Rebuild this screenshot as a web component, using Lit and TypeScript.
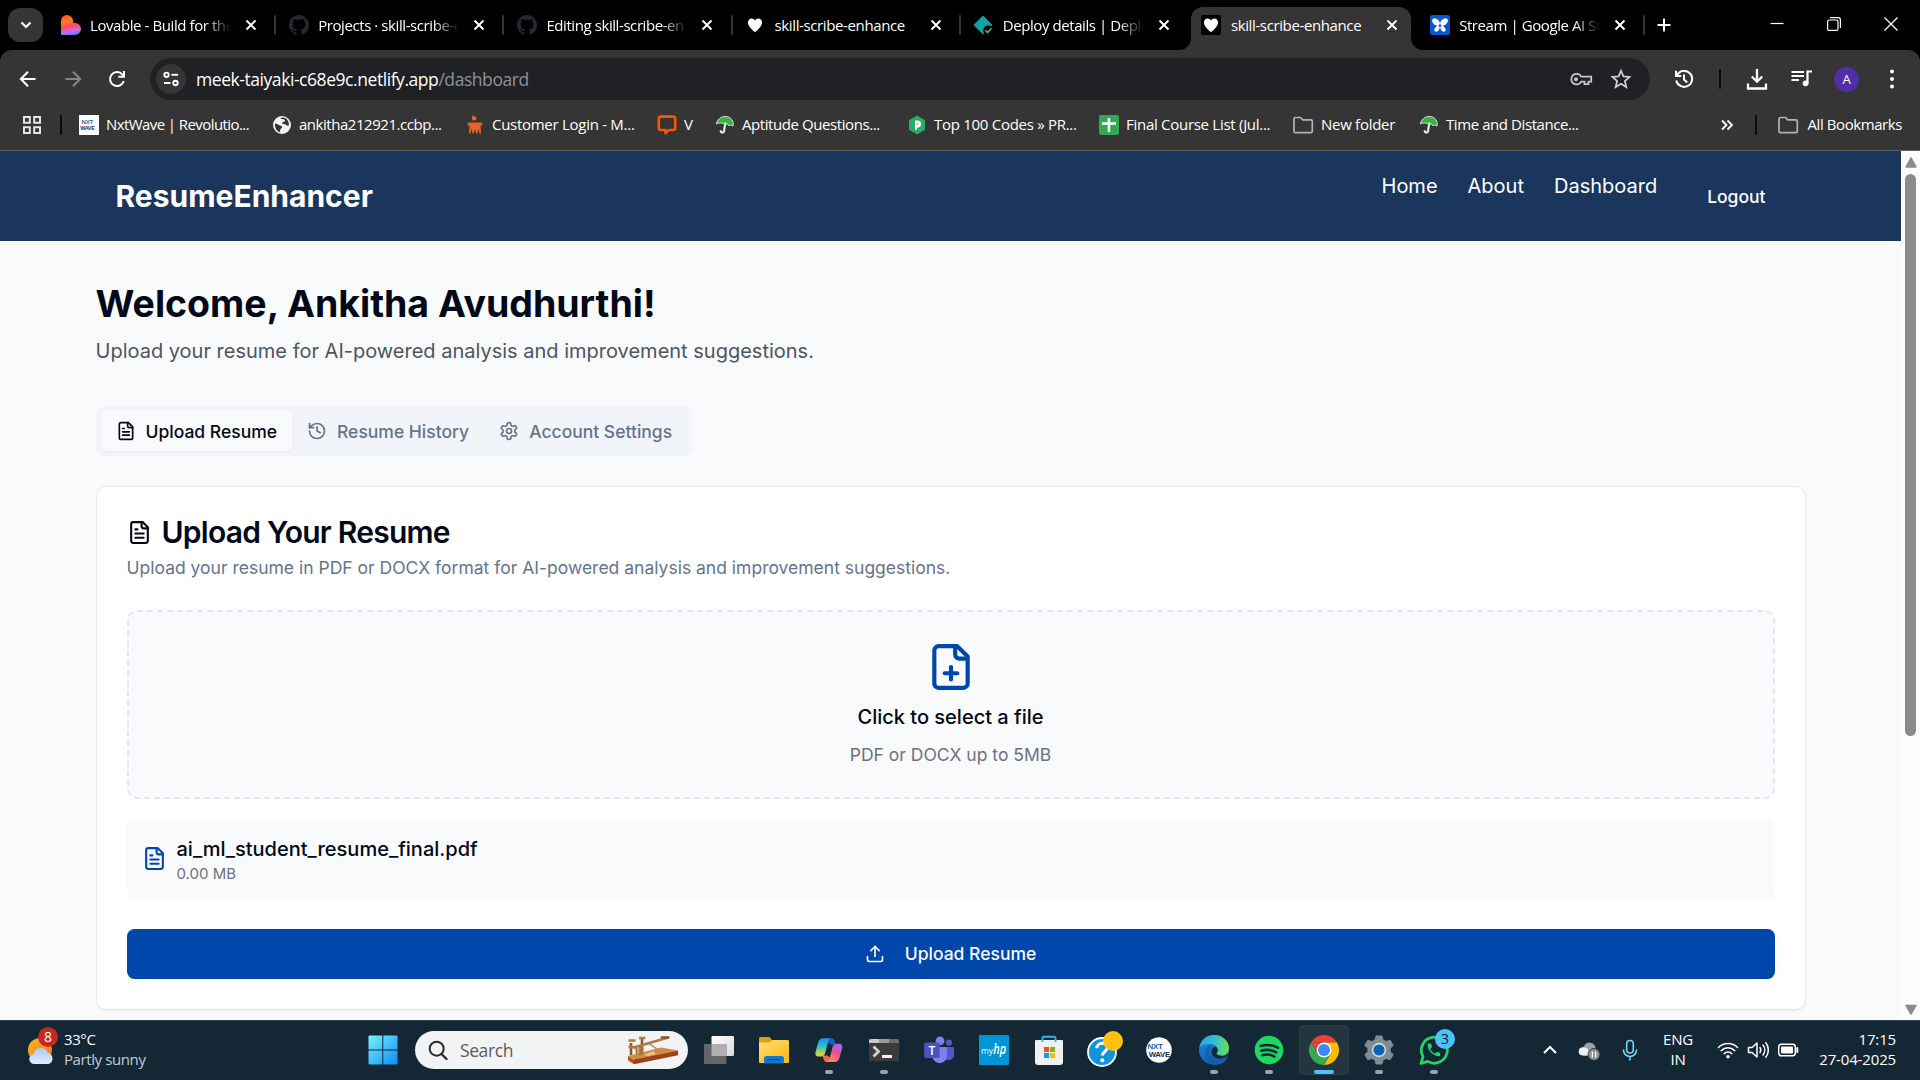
import { LitElement, html, css, svg } from "lit";
import type { TemplateResult } from "lit";
import { customElement } from "lit/decorators.js";
import { classMap } from "lit/directives/class-map.js";

/* ---------- icon helpers ---------- */

const icon = (size: number, box: string, body: unknown, cls = "") =>
  html`<svg class="ic ${cls}" width=${size} height=${size} viewBox=${box}>${body}</svg>`;

const line = (size: number, body: unknown, width = 2) =>
  html`<svg class="ic" width=${size} height=${size} viewBox="0 0 24 24" fill="none" stroke="currentColor"
    stroke-width=${width} stroke-linecap="round" stroke-linejoin="round">${body}</svg>`;

const sheet = svg`<path d="M15 2H6a2 2 0 0 0-2 2v16a2 2 0 0 0 2 2h12a2 2 0 0 0 2-2V7Z"/><path d="M14 2v4a2 2 0 0 0 2 2h4"/>`;
const fileText = svg`${sheet}<path d="M10 9H8"/><path d="M16 13H8"/><path d="M16 17H8"/>`;
const filePlus = svg`${sheet}<path d="M9 15h6"/><path d="M12 18v-6"/>`;
const history = svg`<path d="M3 12a9 9 0 1 0 9-9 9.750 9.750 0 0 0-6.740 2.740L3 8"/><path d="M3 3v5h5"/><path d="M12 7v5l4 2"/>`;
const gear = svg`<path d="M12.22 2h-.44a2 2 0 0 0-2 2v.18a2 2 0 0 1-1 1.73l-.43.25a2 2 0 0 1-2 0l-.15-.08a2 2 0 0 0-2.73.73l-.22.38a2 2 0 0 0 .73 2.73l.15.1a2 2 0 0 1 1 1.72v.51a2 2 0 0 1-1 1.74l-.15.09a2 2 0 0 0-.73 2.73l.22.38a2 2 0 0 0 2.73.73l.15-.08a2 2 0 0 1 2 0l.43.25a2 2 0 0 1 1 1.73V20a2 2 0 0 0 2 2h.44a2 2 0 0 0 2-2v-.18a2 2 0 0 1 1-1.73l.43-.25a2 2 0 0 1 2 0l.15.08a2 2 0 0 0 2.73-.73l.22-.39a2 2 0 0 0-.73-2.73l-.15-.08a2 2 0 0 1-1-1.74v-.5a2 2 0 0 1 1-1.74l.15-.09a2 2 0 0 0 .73-2.73l-.22-.38a2 2 0 0 0-2.73-.73l-.15.08a2 2 0 0 1-2 0l-.43-.25a2 2 0 0 1-1-1.73V4a2 2 0 0 0-2-2z"/><circle cx="12" cy="12" r="3"/>`;
const upload = svg`<path d="M21 15v4a2 2 0 0 1-2 2H5a2 2 0 0 1-2-2v-4"/><path d="m17 8-5-5-5 5"/><path d="M12 3v12"/>`;

const github = icon(20, "0 0 16 16", svg`<path fill="#24292f" d="M8 0C3.58 0 0 3.58 0 8c0 3.54 2.29 6.53 5.47 7.59.4.07.55-.17.55-.38 0-.19-.01-.82-.01-1.49-2.01.37-2.53-.49-2.69-.94-.09-.23-.48-.94-.82-1.13-.28-.15-.68-.52-.01-.53.63-.01 1.08.58 1.23.82.72 1.21 1.87.87 2.33.66.07-.52.28-.87.51-1.07-1.78-.2-3.64-.89-3.64-3.95 0-.87.31-1.59.82-2.15-.08-.2-.36-1.02.08-2.12 0 0 .67-.21 2.2.82.64-.18 1.32-.27 2-.27s1.36.09 2 .27c1.53-1.04 2.2-.82 2.2-.82.44 1.1.16 1.92.08 2.12.51.56.82 1.27.82 2.15 0 3.07-1.87 3.75-3.65 3.95.29.25.54.73.54 1.48 0 1.07-.01 1.93-.01 2.2 0 .21.15.46.55.38A8.01 8.01 0 0 0 16 8c0-4.42-3.58-8-8-8z"/>`);

const lovable = icon(20, "0 0 20 20", svg`<defs><linearGradient id="lov" x1="0.35" y1="0" x2="0.55" y2="1"><stop offset="0" stop-color="#ff5a1f"/><stop offset=".3" stop-color="#ff7a22"/><stop offset=".55" stop-color="#fb4b5b"/><stop offset=".8" stop-color="#c86be8"/><stop offset="1" stop-color="#5a7bff"/></linearGradient></defs><path fill="url(#lov)" d="M6 0a6 6 0 0 1 6 6v2h2a6 6 0 0 1 0 12H0V6a6 6 0 0 1 6-6z"/>`);

const heartPath = "M10 17.2C7 14.6 3 11.2 3 7.4 3 5 4.7 3.4 6.7 3.4c1.4 0 2.6.8 3.3 2 .7-1.2 1.9-2 3.3-2 2 0 3.7 1.6 3.7 4 0 3.8-4 7.2-7 9.8z";
const heart = icon(20, "0 0 20 20", svg`<rect width="20" height="20" rx="2" fill="#000"/><path fill="#fff" d=${heartPath}/>`);

const netlify = icon(20, "0 0 20 20", svg`<path fill="#0fa3a3" d="M10 .5 19.5 10 10 19.5.5 10z"/><circle cx="15.4" cy="15.4" r="5.2" fill="#000"/><path d="m12.400 15.400 2.200 2.200 3.900-4.400" fill="none" stroke="#3fbf4f" stroke-width="1.600"/>`);

const butterfly = icon(20, "0 0 20 20", svg`<rect width="20" height="20" rx="2.500" fill="#0b57d0"/><g fill="#fff"><ellipse cx="6" cy="7" rx="4.300" ry="2.900" transform="rotate(42 6 7)"/><ellipse cx="14" cy="7" rx="4.300" ry="2.900" transform="rotate(-42 14 7)"/><ellipse cx="7" cy="13.800" rx="3.200" ry="2.100" transform="rotate(-50 7 13.800)"/><ellipse cx="13" cy="13.800" rx="3.200" ry="2.100" transform="rotate(50 13 13.800)"/></g>`);

const closeX = icon(12, "0 0 12 12", svg`<path d="M1.500 1.500l9 9M10.500 1.500l-9 9" stroke="#fff" stroke-width="1.900"/>`);

const folder = icon(22, "0 0 22 22", svg`<path d="M2 5a1.500 1.500 0 0 1 1.500-1.500h5l2.300 2.300h8A1.500 1.500 0 0 1 20.300 7.300v9.900a1.500 1.500 0 0 1-1.500 1.500H3.500A1.500 1.500 0 0 1 2 17.200z" fill="none" stroke="#b4b4b4" stroke-width="1.700"/>`);

const umbrella = icon(20, "0 0 20 20", svg`<path d="M1.500 9C2 3 9 0 13.500 2c4 1.700 5.500 6 4.500 9-1.500-1-3-1.200-4.300-.3C12.500 9 10.500 8 8.500 8.800 6.500 7.600 3.500 7.500 1.500 9z" fill="#3fae49" stroke="#d7efd8" stroke-width=".9"/><path d="M10.500 8.500c-1 3-1 5-1.500 7.500-.3 2.300-3 2.300-3.300 0" fill="none" stroke="#dfe9df" stroke-width="2.200" stroke-linecap="round"/>`);

const nxtMini = icon(20, "0 0 20 20", svg`<rect width="20" height="20" fill="#fff"/><text x="2.500" y="9" class="t-nxt" font-size="6.200" fill="#2a6fb5">NXT</text><text x="1.200" y="15.400" class="t-nxt" font-size="5.400" fill="#123a5c">WAVE</text>`);
const globe = icon(20, "0 0 20 20", svg`<circle cx="10" cy="10" r="9" fill="#f1f3f4"/><path fill="#353535" d="M3 8.500c2.500 0 3.500 2 6 2.200 1.500.2 1.700 2 .2 2.700-1.500.6-.5 2.400-1.700 3.800C5 16.400 2.500 12.500 3 8.500zM8.500 3c1 2 3.500.4 4.500 2.200.8 1.500-3 1.300-2.800 3 .3 1.700 3.300.4 4.300 1.900.5.800 1.800.6 2.500.1C17 6 14.500 2.600 10.500 2.600z"/>`);
const mojo = icon(20, "0 0 20 20", svg`<path fill="#e8622c" d="M9 5.500C6 5 6.500 2 8 0c.5 1.500 3.500 1.500 3.500 3.500 0 1.200-1 2-2.500 2zM3 7.500h14l.5 3h-15zM4.500 10.500h11l.5 8h-1.500l-1-5-1 5h-1.300L10 14l-1.200 4.500H7.500l-1-5-1 5H4z"/>`);
const chatV = icon(20, "0 0 20 20", svg`<path fill="none" stroke="#fb5607" stroke-width="2.600" stroke-linejoin="round" d="M3.500 1.600h13a1.700 1.700 0 0 1 1.700 1.700v10a1.700 1.700 0 0 1-1.700 1.700H12l-3.500 3.200V15h-5a1.700 1.700 0 0 1-1.700-1.700v-10a1.700 1.700 0 0 1 1.700-1.700z"/>`);
const hexP = icon(20, "0 0 20 20", svg`<path fill="#27ae60" d="m10 .5 8 4.700v9.600l-8 4.700-8-4.700V5.200z"/><path fill="#fff" d="M8 5.500h2.600a3.500 3.500 0 0 1 0 7H10v2.200H8z"/><circle cx="10.500" cy="9" r=".8" fill="#27ae60"/>`);
const sheets = icon(20, "0 0 20 20", svg`<rect width="20" height="20" rx="2" fill="#34a853"/><path fill="#fff" d="M8.700 3h2.500v14H8.700zM3 7.300h14v2.500H3z"/>`);

/* ---------- taskbar icons ---------- */

const weather = html`<svg class="ic" width="32" height="34" viewBox="0 0 32 34"><defs><linearGradient id="sun" x1="0" y1="0" x2="1" y2="1"><stop offset="0" stop-color="#fbb72a"/><stop offset="1" stop-color="#f2711c"/></linearGradient><linearGradient id="cld" x1="0" y1="0" x2="0" y2="1"><stop offset="0" stop-color="#a9c8fb"/><stop offset="1" stop-color="#e4ecfb"/></linearGradient></defs><circle cx="13" cy="17" r="12" fill="url(#sun)"/><path fill="url(#cld)" d="M7.500 31a5 5 0 0 1-.5-10 7 7 0 0 1 13.600-1.200A5.800 5.800 0 0 1 21.600 31z"/></svg>`;
const windowsLogo = icon(30, "0 0 30 30", svg`<defs><linearGradient id="win" x1="0" y1="0" x2="1" y2="1"><stop offset="0" stop-color="#7af0ff"/><stop offset="1" stop-color="#0a8df5"/></linearGradient></defs><path fill="url(#win)" d="M1.500.5H14.300v14.100H.5V1.500a1 1 0 0 1 1-1zM15.300.5h13.200a1 1 0 0 1 1 1v13.100H15.300zM.5 15.600h13.800v13.900H1.500a1 1 0 0 1-1-1zM15.300 15.600h14.200v12.900a1 1 0 0 1-1 1H15.300z"/>`);
const magnifier = icon(20, "0 0 20 20", svg`<circle cx="8.700" cy="8.700" r="7" fill="none" stroke="#2b2b2b" stroke-width="2"/><path d="m13.500 14 5 5" stroke="#2b2b2b" stroke-width="2.400" stroke-linecap="round"/>`);
const telegraph = html`<svg class="ic" width="52" height="30" viewBox="0 0 52 30"><path fill="#d08a4a" d="m1 21 33-8.500 17 3L8 24.500z"/><path fill="#b5531c" d="M1 21l6 3.500v4.700l-6-4z"/><path fill="#9c4416" d="M7 24.500 51 15.500v4.700L7 29.200z"/><path fill="#f0c481" d="m17 20 9-4 3 3-8 2z"/><path d="M4 20V8M15 15V4" stroke="#8f5a2c" stroke-width="2.600"/><path d="M1.500 12h6M1.500 5.500h7M12 3h6.500" stroke="#b07a45" stroke-width="2.400"/><path d="M7 12.500 41 2.500" stroke="#b27a42" stroke-width="2.800" stroke-linecap="round"/><path d="M35 2.500h6" stroke="#8a5428" stroke-width="2.600" stroke-linecap="round"/><path d="m22 8.500 10 7" stroke="#b98552" stroke-width="1.500"/><rect x="8.500" y="11" width="8" height="9" rx="3" fill="#a86f3c"/><rect x="10" y="12" width="2.200" height="7" fill="#d6a56c"/></svg>`;

const taskView = icon(32, "0 0 32 32", svg`<defs><linearGradient id="tv" x1="0" y1="0" x2="1" y2="1"><stop offset="0" stop-color="#fff"/><stop offset="1" stop-color="#d9d9d9"/></linearGradient></defs><rect x="8.500" y="2" width="22.500" height="20" rx="1.200" fill="url(#tv)"/><rect x="1" y="10" width="22.500" height="20" rx="1.200" fill="#63676a"/><path fill="#aeb0b2" d="M8.500 10h15v12h-15z"/>`);
const explorer = icon(32, "0 0 32 32", svg`<defs><linearGradient id="fo" x1="0" y1="0" x2="1" y2="1"><stop offset="0" stop-color="#ffdf73"/><stop offset="1" stop-color="#fbb815"/></linearGradient></defs><path fill="#dfa00f" d="M1 4.500A1.500 1.500 0 0 1 2.500 3h9L14 6v5H1z"/><path fill="url(#fo)" d="M1 8.500h10.500L14 6h15.500A1.500 1.500 0 0 1 31 7.500v20.500a1 1 0 0 1-1 1H2a1 1 0 0 1-1-1z"/><path fill="#1478cf" d="M6 24.500A2.500 2.500 0 0 1 8.500 22h15a2.500 2.500 0 0 1 2.500 2.500V29.500H6z"/><path d="M10 25.600h12" stroke="#0b4f94" stroke-width="1.400" stroke-linecap="round"/>`);
const copilot = icon(32, "0 0 32 32", svg`<defs><linearGradient id="cp1" x1=".3" y1="0" x2=".3" y2="1"><stop offset="0" stop-color="#1b8df0"/><stop offset=".45" stop-color="#27c3c9"/><stop offset=".75" stop-color="#9ed35b"/><stop offset="1" stop-color="#f5c93a"/></linearGradient><linearGradient id="cp2" x1=".8" y1="0" x2=".3" y2="1"><stop offset="0" stop-color="#9c6cf2"/><stop offset=".5" stop-color="#e84f92"/><stop offset="1" stop-color="#ff8f4a"/></linearGradient></defs><g transform="translate(1.300 1.500) scale(.91)"><path fill="#1660d0" d="M10 3h9c2 0 3 1.500 3.600 4l.9 3h-5.500z"/><path fill="url(#cp1)" d="M9.500 3h9c-2 0-2.900 2-3.500 4.500l-3 11.500c-.7 2.500-1.800 4-4 4H4.500C1.500 23 .7 20.500 1.500 17.500l3-10.500C5.300 4.300 7 3 9.500 3z"/><path fill="#f06a50" d="M22.500 29h-9c-2 0-3-1.500-3.600-4L9 22h5.500z"/><path fill="url(#cp2)" d="M22.500 29h-9c2 0 2.900-2 3.500-4.500L20 13c.7-2.500 1.800-4 4-4h3.500c3 0 3.800 2.500 3 5.500l-3 10.500c-.8 2.700-2.500 4-5 4z"/></g>`);
const terminal = icon(32, "0 0 32 32", svg`<rect x="1" y="5" width="30" height="22" rx="1.600" fill="#3c3c3c"/><path fill="#c9c9c9" d="M2.600 5H11v4H1V6.600A1.600 1.600 0 0 1 2.600 5z"/><path fill="#999" d="M11 5h10v4H11z"/><path fill="#6e6e6e" d="M21 5h8.400A1.600 1.600 0 0 1 31 6.600V9H21z"/><path d="m5.500 12.500 5 5-5 5" fill="none" stroke="#d0d0d0" stroke-width="2.800"/><path fill="#f3f3f3" d="M14 21h10v3H14z"/>`);
const teams = icon(32, "0 0 32 32", svg`<circle cx="17" cy="7" r="4.400" fill="#7b83eb"/><circle cx="26" cy="8.500" r="3.100" fill="#5059c9"/><path fill="#5059c9" d="M21 13h8.800a1.200 1.200 0 0 1 1.200 1.200v7a5.500 5.500 0 0 1-9 3.800z"/><path fill="#7b83eb" d="M9.500 13h13a1.400 1.400 0 0 1 1.400 1.400v7.600a7.200 7.200 0 0 1-14.400 0z"/><rect x="1.200" y="8.500" width="15.500" height="15.500" rx="1.600" fill="#4b53bc"/><text x="9" y="20.700" text-anchor="middle" class="t-ui" font-size="12" font-weight="600" fill="#fff">T</text>`);
const myhp = icon(32, "0 0 32 32", svg`<rect x="1" y="1" width="30" height="30" rx="1" fill="#0096d6"/><text x="3" y="19.500" class="t-ui" font-size="9" fill="#fff" textLength="12" lengthAdjust="spacingAndGlyphs">my</text><text x="15.300" y="20" class="t-ui" font-size="14.500" font-style="italic" font-weight="600" fill="#fff" textLength="13" lengthAdjust="spacingAndGlyphs">hp</text>`);
const store = icon(32, "0 0 32 32", svg`<path fill="#f0f0f0" d="M2 7a1 1 0 0 1 1-1h26a1 1 0 0 1 1 1v21a3 3 0 0 1-3 3H5a3 3 0 0 1-3-3z"/><path d="M9.500 8V4a1.200 1.200 0 0 1 1.200-1.200h10.600A1.200 1.200 0 0 1 22.500 4v4" fill="none" stroke="#2ab4f2" stroke-width="1.900"/><path fill="#f25022" d="M11 13h5v5h-5z"/><path fill="#7fba00" d="M17 13h5v5h-5z"/><path fill="#00a4ef" d="M11 19h5v5h-5z"/><path fill="#ffb900" d="M17 19h5v5h-5z"/>`);
const help = icon(38, "0 0 38 38", svg`<circle cx="17" cy="21" r="14" fill="#0f95d8" stroke="#fff" stroke-width="1.800"/><path d="M11.800 17.200c.2-6.400 10.600-6.400 10.400-.3-.1 3.400-4.800 3.900-4.800 7.600" fill="none" stroke="#fff" stroke-width="3"/><circle cx="17.300" cy="29.200" r="2" fill="#fff"/><circle cx="28" cy="10" r="10" fill="#ffc20e"/>`);
const nxtWave = icon(32, "0 0 32 32", svg`<circle cx="16" cy="16" r="12.800" fill="#fff"/><text x="4.500" y="15" class="t-nxt" font-size="8" fill="#1f5f9e">NXT</text><text x="16.300" y="22.500" text-anchor="middle" class="t-nxt" font-size="7.800" fill="#17324d">WAVE</text>`);
const edge = icon(32, "0 0 32 32", svg`<defs><linearGradient id="ed1" x1="0" y1=".3" x2="1" y2=".4"><stop offset="0" stop-color="#2aa7e8"/><stop offset=".55" stop-color="#35c1c9"/><stop offset="1" stop-color="#6be04f"/></linearGradient><linearGradient id="ed2" x1=".2" y1="0" x2=".6" y2="1"><stop offset="0" stop-color="#1b8de0"/><stop offset="1" stop-color="#0c59a4"/></linearGradient></defs><circle cx="16" cy="16" r="15" fill="url(#ed2)"/><path fill="url(#ed1)" d="M1.500 13C2.500 6 8.500 1 16 1c9 0 15 6.500 15 13 0 5-3.500 7.500-7.500 7.500-3 0-5-1.200-5-2.200 0-.8 1.300-1.300 1.300-3.300 0-3.200-3.500-6-8-6-4.300 0-8 1-10.300 3z"/><path fill="#135fae" d="M11 17c0-3 2-5 4-6-5 0-8 4-7.500 9 .6 5.500 5 10 10 10.800C25 30.500 28.500 26 29.500 24c-7 4.500-18.500 1.500-18.500-7z"/><path fill="#142735" d="M18.500 19.300c0-.8 1.300-1.300 1.300-3.300a5 5 0 0 0-2-3.500c-3 .5-4.600 3-4.300 5.500.5 4.500 5 7.500 9.500 6.500 4-.9 7.500-2 8.500-6-2 2.500-5 3.800-8 3.400-3-.3-5-1.200-5-2.600z"/>`);
const spotify = icon(32, "0 0 32 32", svg`<circle cx="16" cy="16" r="14.300" fill="#1ed760"/><path d="M7.500 12c6-1.800 12.500-1.100 17.500 1.800M8.300 16.700c5-1.400 10.500-.9 15 1.700M9.200 21.200c4.200-1.100 8.500-.8 12.300 1.400" fill="none" stroke="#142735" stroke-width="2.500" stroke-linecap="round"/>`);
const chrome = icon(32, "0 0 32 32", svg`<path fill="#ea4335" d="M3 8.500A15 15 0 0 1 29 8.500H16z"/><path fill="#ea4335" d="M3 8.500h13v7.500H7.500z"/><path fill="#fbbc04" d="M29 8.500A15 15 0 0 1 16 31l6.500-11.200L16 8.500z"/><path fill="#34a853" d="M3 8.500A15 15 0 0 0 16 31l6.500-11.200h-13z"/><circle cx="16" cy="16" r="7.500" fill="#fff"/><circle cx="16" cy="16" r="6" fill="#4285f4"/>`);
const settingsIcon = icon(32, "0 0 32 32", svg`<path fill="#7f8b95" stroke="#7f8b95" stroke-width="1" stroke-linejoin="round" d="m13 2h6l1 3.900 3 1.700 4.200-1.300 3 5.200-3.100 2.800v3.400l3.100 2.800-3 5.200-4.200-1.300-3 1.700-1 3.900h-6l-1-3.900-3-1.700-4.200 1.300-3-5.200 3.100-2.800v-3.400l-3.100-2.800 3-5.200 4.200 1.300 3-1.700z"/><circle cx="16" cy="16" r="7.200" fill="#d6dce1"/><circle cx="16" cy="16" r="5.600" fill="#0b62b3"/>`);
const whatsapp = icon(32, "0 0 32 32", svg`<path d="M3 29.500 5 22.600A13 13 0 1 1 9.700 27.400z" fill="#142735" stroke="#25d366" stroke-width="2.800" stroke-linejoin="round"/><path fill="#25d366" transform="translate(7.500 7.500) scale(.7)" d="M6.600 10.800c1.400 2.800 3.800 5.100 6.600 6.600l2.200-2.200c.3-.3.700-.4 1-.2 1.100.4 2.300.6 3.600.6.600 0 1 .4 1 1V20c0 .6-.4 1-1 1C10.600 21 3 13.400 3 4c0-.6.400-1 1-1h3.500c.6 0 1 .4 1 1 0 1.300.2 2.500.6 3.600.1.300 0 .7-.2 1z"/>`);

/* ---------- data ---------- */

interface Tab { glyph: TemplateResult; label: string; active?: boolean; sep?: boolean; }
const TABS: Tab[] = [
  { glyph: lovable, label: "Lovable - Build for the", sep: true },
  { glyph: github, label: "Projects · skill-scribe-e", sep: true },
  { glyph: github, label: "Editing skill-scribe-en", sep: true },
  { glyph: heart, label: "skill-scribe-enhance", sep: true },
  { glyph: netlify, label: "Deploy details | Deplo" },
  { glyph: heart, label: "skill-scribe-enhance", active: true },
  { glyph: butterfly, label: "Stream | Google AI St", sep: true },
];

interface Mark { glyph: TemplateResult; label: string; fit: string; }
const BOOKMARKS: Mark[] = [
  { glyph: nxtMini, label: "NxtWave | Revolutio...", fit: "tight" },
  { glyph: globe, label: "ankitha212921.ccbp...", fit: "snug" },
  { glyph: mojo, label: "Customer Login - M...", fit: "wide" },
  { glyph: chatV, label: "V", fit: "" },
  { glyph: umbrella, label: "Aptitude Questions...", fit: "" },
  { glyph: hexP, label: "Top 100 Codes » PR...", fit: "wide" },
  { glyph: sheets, label: "Final Course List (Jul...", fit: "wide" },
  { glyph: folder, label: "New folder", fit: "wide" },
  { glyph: umbrella, label: "Time and Distance...", fit: "" },
];

interface App { glyph: TemplateResult; running?: boolean; active?: boolean; badge?: string; }
const APPS: App[] = [
  { glyph: taskView }, { glyph: explorer }, { glyph: copilot, running: true },
  { glyph: terminal, running: true }, { glyph: teams }, { glyph: myhp }, { glyph: store },
  { glyph: help }, { glyph: nxtWave }, { glyph: edge, running: true },
  { glyph: spotify, running: true }, { glyph: chrome, active: true },
  { glyph: settingsIcon, running: true }, { glyph: whatsapp, running: true, badge: "3" },
];

const shared = css`
  :host, *, *::before, *::after { box-sizing: border-box; }
  .ic { display: block; flex: none; }
  .t-ui { font-family: "Open Sans", sans-serif; letter-spacing: 0; }
  .t-nxt { font-family: "Liberation Sans", sans-serif; font-weight: 700; letter-spacing: -0.3px; }
`;

/* ---------- browser frame ---------- */

@customElement("browser-bar")
class BrowserBar extends LitElement {
  static styles = [shared, css`
    :host { display: block; height: 151px; background: #353535; border-bottom: 1px solid #5f6061; color: #fff;
      font-family: "Open Sans", "Noto Sans", sans-serif; font-size: 15px; letter-spacing: -0.42px; white-space: nowrap; }
    .strip { height: 50px; background: #000; display: flex; align-items: stretch; padding-left: 8px; }
    .search { width: 35px; height: 34px; margin: 8px 5px 0 0; border-radius: 12px; background: #353535; display: grid; place-items: center; }
    .tab { width: 228.2px; display: flex; align-items: center; padding-left: 12.5px; position: relative; }
    .label { width: 152px; margin-left: 9.500px; line-height: 24px;
      -webkit-mask-image: linear-gradient(90deg, #000 115px, transparent 141px); mask-image: linear-gradient(90deg, #000 115px, transparent 141px); }
    .label.whole { -webkit-mask-image: none; mask-image: none; letter-spacing: -0.38px; }
    .x { margin-left: 3px; }
    .sep::after { content: ""; position: absolute; right: 0; top: 15px; width: 2px; height: 20px; background: #353535; border-radius: 1px; }
    .active::before { content: ""; position: absolute; left: 2px; right: 6px; top: 7px; bottom: 0; background: #353535; border-radius: 12px 12px 0 0; }
    .active > * { position: relative; }
    .active > .foot { position: absolute; left: -10px; bottom: 0; height: 12px; width: 244px; }
    .plus { display: flex; align-items: center; padding-left: 11px; }
    .win { margin-left: auto; display: flex; align-items: center; gap: 41px; padding: 0 21px 3px 0; }
    .bar { height: 50px; display: flex; align-items: center; padding: 8px 16px 0 16px; background: #353535; border-radius: 12px 12px 0 0; }
    .under { background: #000; }
    .nav { display: flex; gap: 20.500px; width: 134px; flex: none; }
    .omni { width: 1501px; height: 42px; border-radius: 21px; background: #202124; display: flex; align-items: center; padding: 0 18px 0 6px; font-size: 17.500px; letter-spacing: -0.44px; }
    .site { width: 30px; height: 30px; border-radius: 50%; background: #353535; display: grid; place-items: center; margin-right: 10px; }
    .path { color: #8f9194; }
    .omni-end { margin-left: auto; display: flex; align-items: center; gap: 17px; }
    .tools { display: flex; align-items: center; padding-left: 22px; flex: 1; }
    .vr { width: 2px; height: 20px; background: #0b0b0b; border-radius: 1px; }
    .vr.mid { margin: 0 24px 0 23px; }
    .vr.late { margin-left: 21px; }
    .avatar { width: 25px; height: 25px; margin: 0 21px; border-radius: 50%; background: #512da8; display: grid; place-items: center; font-size: 13px; letter-spacing: 0; }
    .media { margin-left: 20px; }
    .marks { height: 50px; display: flex; align-items: center; padding: 0 18px 0 22px; }
    .apps { margin-right: 18px; }
    .items { display: grid; grid-template-columns: 193px 193px 192px 58px 192px 192px 193px 127px 170px; margin-left: 17px; }
    .mark { display: flex; align-items: center; gap: 8px; }
    .mark span, .all span { position: relative; top: -1px; }
    .mark span { margin-left: -1px; }
    .tight { letter-spacing: -0.58px; }
    .snug { letter-spacing: -0.46px; }
    .wide { letter-spacing: -0.28px; }
    .more { display: flex; align-items: center; margin-left: auto; }
    .all { display: flex; align-items: center; gap: 9px; margin-left: 20px; }
  `];

  private tab(t: Tab) {
    const cls = { tab: true, active: !!t.active, sep: !!t.sep };
    const whole = t.label === "skill-scribe-enhance";
    return html`<div class=${classMap(cls)}>
      ${t.active ? html`<svg class="foot" viewBox="0 0 244 12"><path fill="#353535" d="M0 12A12 12 0 0 0 12 0v12zM244 12A12 12 0 0 1 232 0v12z"/></svg>` : null}
      ${t.glyph}<span class=${classMap({ label: true, whole })}>${t.label}</span>
      <span class="x">${closeX}</span>
    </div>`;
  }

  render() {
    return html`
      <div class="strip">
        <div class="search">${icon(14, "0 0 14 14", svg`<path d="m2.500 4.500 4.500 4.500 4.500-4.500" fill="none" stroke="#fff" stroke-width="2.200"/>`)}</div>
        ${TABS.map((t) => this.tab(t))}
        <div class="plus">${icon(16, "0 0 16 16", svg`<path d="M8 1.500v13M1.500 8h13" stroke="#fff" stroke-width="2"/>`)}</div>
        <div class="win">
          ${icon(16, "0 0 16 16", svg`<path d="M1.500 7.500h13" stroke="#fff" stroke-width="1.200"/>`)}
          ${icon(16, "0 0 16 16", svg`<rect x="1.600" y="4" width="10.400" height="10.400" rx="1.500" fill="none" stroke="#fff" stroke-width="1.200"/><path d="M4 1.600h8.200a2.200 2.200 0 0 1 2.200 2.200V12" fill="none" stroke="#fff" stroke-width="1.200"/>`)}
          ${icon(16, "0 0 16 16", svg`<path d="m1.500 1.500 13 13M14.500 1.500l-13 13" stroke="#fff" stroke-width="1.300"/>`)}
        </div>
      </div>
      <div class="under"><div class="bar">
        <div class="nav">
          ${icon(24, "0 0 24 24", svg`<path d="M19.500 12h-14M12 4.800 4.800 12l7.200 7.200" fill="none" stroke="#fff" stroke-width="2"/>`)}
          ${icon(24, "0 0 24 24", svg`<path d="M4.500 12h14M12 4.800l7.200 7.200-7.200 7.200" fill="none" stroke="#858585" stroke-width="2"/>`)}
          ${icon(24, "0 0 24 24", svg`<path d="M18.800 14A7 7 0 1 1 17.500 7.600L19 9.300" fill="none" stroke="#fff" stroke-width="2"/><path d="M19 4v5.700h-5.700" fill="none" stroke="#fff" stroke-width="2"/>`)}
        </div>
        <div class="omni">
          <span class="site">${icon(18, "0 0 18 18", svg`<g fill="none" stroke="#fff" stroke-width="1.900"><circle cx="4.500" cy="4.800" r="2.200"/><path d="M9.500 4.800H16"/><circle cx="13.500" cy="13" r="2.200"/><path d="M2 13h6.500"/></g>`)}</span>
          <span>meek-taiyaki-c68e9c.netlify.app<span class="path">/dashboard</span></span>
          <span class="omni-end">
            ${icon(24, "0 0 24 24", svg`<path d="M12.200 9.600A5.300 5.300 0 1 0 12.200 14.700h3.300v2.500h4v-2.500h2.700V9.600z" fill="none" stroke="#c7c7c7" stroke-width="1.800"/><circle cx="7" cy="12.200" r="2" fill="#c7c7c7"/>`)}
            ${icon(22, "0 0 24 24", svg`<path d="m12 3 2.600 6.200 6.700.6-5.100 4.400 1.600 6.600L12 17.300l-5.800 3.500 1.600-6.600-5.100-4.400 6.700-.6z" fill="none" stroke="#d0d0d0" stroke-width="1.900"/>`)}
          </span>
        </div>
        <div class="tools">
          ${icon(24, "0 0 24 24", svg`<path d="M4.300 13.500A8 8 0 1 0 6.200 6.500L4 9" fill="none" stroke="#fff" stroke-width="2"/><path d="M4 3.800V9h5.200M12 7.500v5l3.200 3" fill="none" stroke="#fff" stroke-width="2"/>`)}
          <span class="vr mid"></span>
          ${icon(24, "0 0 24 24", svg`<path d="M12 2v12.500M6.800 9.500 12 14.700l5.200-5.200M3 16.500V21.500h18V16.500" fill="none" stroke="#fff" stroke-width="2.300"/>`)}
          ${icon(24, "0 0 24 24", svg`<path d="M2.500 5h12.500M2.500 9h12.500M2.500 13H10" stroke="#fff" stroke-width="2"/><path d="M18.500 16.500V4.500h4.500" fill="none" stroke="#fff" stroke-width="2.200"/><circle cx="16.600" cy="16.300" r="2.900" fill="#fff"/>`, "media")}
          <span class="avatar">A</span>
          ${icon(24, "0 0 24 24", svg`<g fill="#fff"><circle cx="12" cy="4.500" r="2"/><circle cx="12" cy="12" r="2"/><circle cx="12" cy="19.500" r="2"/></g>`)}
        </div>
      </div></div>
      <div class="marks">
        <span class="apps">${icon(20, "0 0 20 20", svg`<path d="M2 2h5.800v5.800H2zM12.200 2H18v5.800h-5.800zM2 12.200h5.800V18H2zM12.200 12.200H18V18h-5.800z" fill="none" stroke="#e6e6e6" stroke-width="2"/>`)}</span>
        <span class="vr"></span>
        <div class="items">${BOOKMARKS.map((m) => html`<div class="mark">${m.glyph}<span class=${m.fit}>${m.label}</span></div>`)}</div>
        <div class="more">
          ${icon(14, "0 0 14 14", svg`<path d="m2 2.500 4.500 4.500L2 11.500M7.500 2.500 12 7l-4.500 4.500" fill="none" stroke="#fff" stroke-width="1.800"/>`)}
          <span class="vr late"></span>
          <div class="all">${folder}<span>All Bookmarks</span></div>
        </div>
      </div>`;
  }
}

/* ---------- web page ---------- */

@customElement("resume-page")
class ResumePage extends LitElement {
  static styles = [shared, css`
    :host { display: flex; height: 869px; overflow: hidden; font-family: Inter, sans-serif; color: #020817; background: #f9fafb; }
    .page { flex: 1; }
    .wrap { width: 1750px; margin: 0 auto; padding: 0 20px; }
    .head { height: 90px; background: #1b365d; color: #fff; }
    .head .wrap { padding: 20px 40px; display: flex; justify-content: space-between; }
    .brand { font-size: 30px; line-height: 50px; font-weight: 700; }
    .links { display: flex; gap: 30px; font-size: 20px; line-height: 30px; }
    .logout { font-size: 17.500px; font-weight: 500; line-height: 51px; padding: 0 20px; }
    h1 { margin: 40px 0 0; font-size: 37.500px; line-height: 45px; font-weight: 700; }
    .sub { margin: 10px 0 40px; font-size: 20px; line-height: 30px; color: #4b5563; }
    .tabs { display: inline-flex; height: 50px; padding: 5px; background: #f1f5f9; border-radius: 7.500px; font-size: 17.500px; font-weight: 500; color: #64748b; vertical-align: top; }
    .tab { display: flex; align-items: center; gap: 10px; padding: 0 15px; border-radius: 5px; }
    .tab.on { background: #f9fafb; color: #020817; box-shadow: 0 1px 2px rgba(0,0,0,.06); }
    .card { margin-top: 30px; padding: 30px; border: 1px solid #e2e8f0; border-radius: 10px; background: #fff; box-shadow: 0 1px 2px rgba(0,0,0,.05); }
    h3 { margin: 0; display: flex; align-items: center; gap: 10px; font-size: 30px; line-height: 30px; font-weight: 600; letter-spacing: -.75px; }
    .desc { margin: 7.500px 0 30px; font-size: 17.500px; line-height: 25px; color: #64748b; }
    .drop { height: 189px; border: 2px dashed #e2e8f0; border-radius: 10px; background: #f9fafb; padding: 30px; display: flex; flex-direction: column; align-items: center; gap: 10px; }
    .brandc { color: #0047ab; }
    .pick { font-size: 20px; line-height: 30px; font-weight: 500; }
    .hint { font-size: 17.500px; line-height: 25px; color: #6b7280; }
    .file { margin-top: 20px; height: 80px; padding: 15px; display: flex; align-items: center; gap: 10px; border-radius: 7.500px; background: #f9fafb; }
    .name { font-size: 20px; line-height: 30px; font-weight: 500; }
    .size { font-size: 15px; line-height: 20px; color: #6b7280; }
    .go { margin-top: 30px; height: 50px; border-radius: 7.500px; background: #0047ab; color: #f8fafc; display: flex; align-items: center; justify-content: center; gap: 20px; font-size: 17.500px; font-weight: 500; }
    .scroll { width: 19px; flex: none; background: #fcfcfc; display: flex; flex-direction: column; align-items: center; padding: 5px 0 4px; }
    .thumb { width: 11px; height: 562px; margin-top: 6px; border-radius: 6px; background: #8b8b8b; }
    .down { margin-top: auto; }
  `];

  render() {
    return html`
      <div class="page">
        <div class="head"><div class="wrap">
          <div class="brand">ResumeEnhancer</div>
          <div class="links"><span>Home</span><span>About</span><span>Dashboard</span><span class="logout">Logout</span></div>
        </div></div>
        <div class="wrap">
          <h1>Welcome, Ankitha Avudhurthi!</h1>
          <p class="sub">Upload your resume for AI-powered analysis and improvement suggestions.</p>
          <div class="tabs">
            <span class="tab on">${line(20, fileText)}Upload Resume</span>
            <span class="tab">${line(20, history)}Resume History</span>
            <span class="tab">${line(20, gear)}Account Settings</span>
          </div>
          <div class="card">
            <h3>${line(25, fileText)}Upload Your Resume</h3>
            <p class="desc">Upload your resume in PDF or DOCX format for AI-powered analysis and improvement suggestions.</p>
            <div class="drop">
              <span class="brandc">${line(50, filePlus)}</span>
              <span class="pick">Click to select a file</span>
              <span class="hint">PDF or DOCX up to 5MB</span>
            </div>
            <div class="file">
              <span class="brandc">${line(25, fileText)}</span>
              <div><div class="name">ai_ml_student_resume_final.pdf</div><div class="size">0.00 MB</div></div>
            </div>
            <div class="go">${line(20, upload)}<span>Upload Resume</span></div>
          </div>
        </div>
      </div>
      <div class="scroll">
        ${icon(12, "0 0 12 12", svg`<path d="M6 1.800 11 11H1z" fill="#8b8b8b" stroke="#8b8b8b" stroke-width="1.500" stroke-linejoin="round"/>`)}
        <div class="thumb"></div>
        <span class="down">${icon(12, "0 0 12 12", svg`<path d="M6 10.200 1 1.500h10z" fill="#8b8b8b" stroke="#8b8b8b" stroke-width="1.500" stroke-linejoin="round"/>`)}</span>
      </div>`;
  }
}

/* ---------- taskbar ---------- */

@customElement("task-bar")
class TaskBar extends LitElement {
  static styles = [shared, css`
    :host { display: flex; height: 60px; background: #142735; border-top: 1px solid #33434f; color: #fff; padding: 0 24px 1px 27px;
      font-family: "Open Sans", "Noto Sans", sans-serif; font-size: 15px; letter-spacing: -0.4px; line-height: 20px; white-space: nowrap; align-items: center; }
    .weather { width: 341px; display: flex; align-items: center; gap: 5px; flex: none; }
    .words { padding-bottom: 3px; }
    .glyph { position: relative; }
    .count { position: absolute; left: 11px; top: -6px; width: 20px; height: 20px; border-radius: 50%; background: #c42b1c; text-align: center; letter-spacing: 0; font-size: 14px; line-height: 20px; }
    .dim { color: #c6ccd1; }
    .find { width: 273px; height: 38px; margin-left: 17px; border-radius: 19px; background: #f1f3f5; color: #5c5c5c; display: flex; align-items: center; padding: 0 9px 0 13px; font-size: 17.500px; flex: none; }
    .find .word { margin: 0 auto 1px 12px; }
    .apps { display: flex; gap: 5px; margin-left: 6px; }
    .app { width: 50px; height: 50px; border-radius: 5px; display: grid; place-items: center; position: relative; }
    .app.active { background: #25353f; box-shadow: 0 0 0 1px #2f3f4a inset; }
    .app.running::after, .app.active::after { content: ""; position: absolute; left: 21px; bottom: 1px; width: 8px; height: 4px; border-radius: 2px; background: #9aa3aa; }
    .app.active::after { left: 15px; width: 20px; background: #4cc2ff; }
    .note { position: absolute; right: 4px; top: 4px; width: 20px; height: 20px; border-radius: 50%; background: #4cc2ff; color: #0b1a24; text-align: center; letter-spacing: 0; font-size: 14px; }
    .tray { margin-left: auto; display: flex; align-items: center; }
    .cloud { margin: 0 17px 0 19px; }
    .lang { text-align: center; width: 36px; margin: 0 20px 0 18px; padding-bottom: 2px; letter-spacing: -0.2px; }
    .stat { display: flex; gap: 6px; align-items: center; }
    .clock { text-align: right; width: 96px; padding-bottom: 2px; letter-spacing: -0.15px; }
  `];

  render() {
    return html`
      <div class="weather">
        <div class="glyph">${weather}<span class="count">8</span></div>
        <div class="words"><div>33°C</div><div class="dim">Partly sunny</div></div>
      </div>
      ${windowsLogo}
      <div class="find">${magnifier}<span class="word">Search</span>${telegraph}</div>
      <div class="apps">${APPS.map((a) => html`
        <div class=${classMap({ app: true, active: !!a.active, running: !!a.running })}>
          ${a.glyph}${a.badge ? html`<span class="note">${a.badge}</span>` : null}
        </div>`)}</div>
      <div class="tray">
        ${icon(16, "0 0 16 16", svg`<path d="m2 11 6-6 6 6" fill="none" stroke="#fff" stroke-width="2"/>`)}
        ${icon(24, "0 0 24 24", svg`<path fill="#9aa1a7" d="M8 17.500a4.500 4.500 0 0 1-1-9 6 6 0 0 1 11.500 1V17.500z"/><path fill="#f0f2f4" d="M5.500 17.500a4 4 0 0 1 .3-8c4-.5 6 1.500 8 8z"/><circle cx="17" cy="16.500" r="6" fill="#8b8f93" stroke="#142735" stroke-width=".8"/><path d="M15.400 13.500v6M18.600 13.500v6" stroke="#fff" stroke-width="1.300"/>`, "cloud")}
        ${icon(24, "0 0 24 24", svg`<g fill="none" stroke="#7fd3f2" stroke-width="1.600" stroke-linecap="round"><rect x="8.700" y="2.500" width="6.600" height="12.500" rx="3.300"/><path d="M5.500 12a6.500 6.500 0 0 0 13 0M12 18.500V22"/></g>`)}
        <div class="lang"><div>ENG</div><div>IN</div></div>
        <div class="stat">
          ${icon(24, "0 0 24 24", svg`<g fill="none" stroke="#fff" stroke-width="1.500" stroke-linecap="round"><path d="M2.500 9.500a13.400 13.400 0 0 1 19 0M5.300 12.600a9.500 9.500 0 0 1 13.400 0M8.200 15.600a5.400 5.400 0 0 1 7.600 0"/></g><circle cx="12" cy="18.700" r="1.700" fill="#fff"/>`)}
          ${icon(24, "0 0 24 24", svg`<path d="M2.500 9.500H6L11 5v14l-5-4.500H2.500zM14 9.500a4.500 4.500 0 0 1 0 5M17 7a8 8 0 0 1 0 10M19.800 4.800a11.500 11.500 0 0 1 0 14.400" fill="none" stroke="#fff" stroke-width="1.500" stroke-linecap="round" stroke-linejoin="round"/>`)}
          ${icon(24, "0 0 24 24", svg`<rect x="2.700" y="6.200" width="16.600" height="11.600" rx="2.700" fill="none" stroke="#fff" stroke-width="1.500"/><rect x="5" y="8.500" width="12" height="7" rx="1" fill="#fff"/><path d="M21.300 10v4" stroke="#fff" stroke-width="2" stroke-linecap="round"/>`)}
        </div>
        <div class="clock"><div>17:15</div><div>27-04-2025</div></div>
      </div>`;
  }
}

@customElement("app-root")
class AppRoot extends LitElement {
  static styles = css`
    :host { display: block; width: 1920px; height: 1080px; overflow: hidden; }
  `;
  render() {
    return html`<browser-bar></browser-bar><resume-page></resume-page><task-bar></task-bar>`;
  }
}
